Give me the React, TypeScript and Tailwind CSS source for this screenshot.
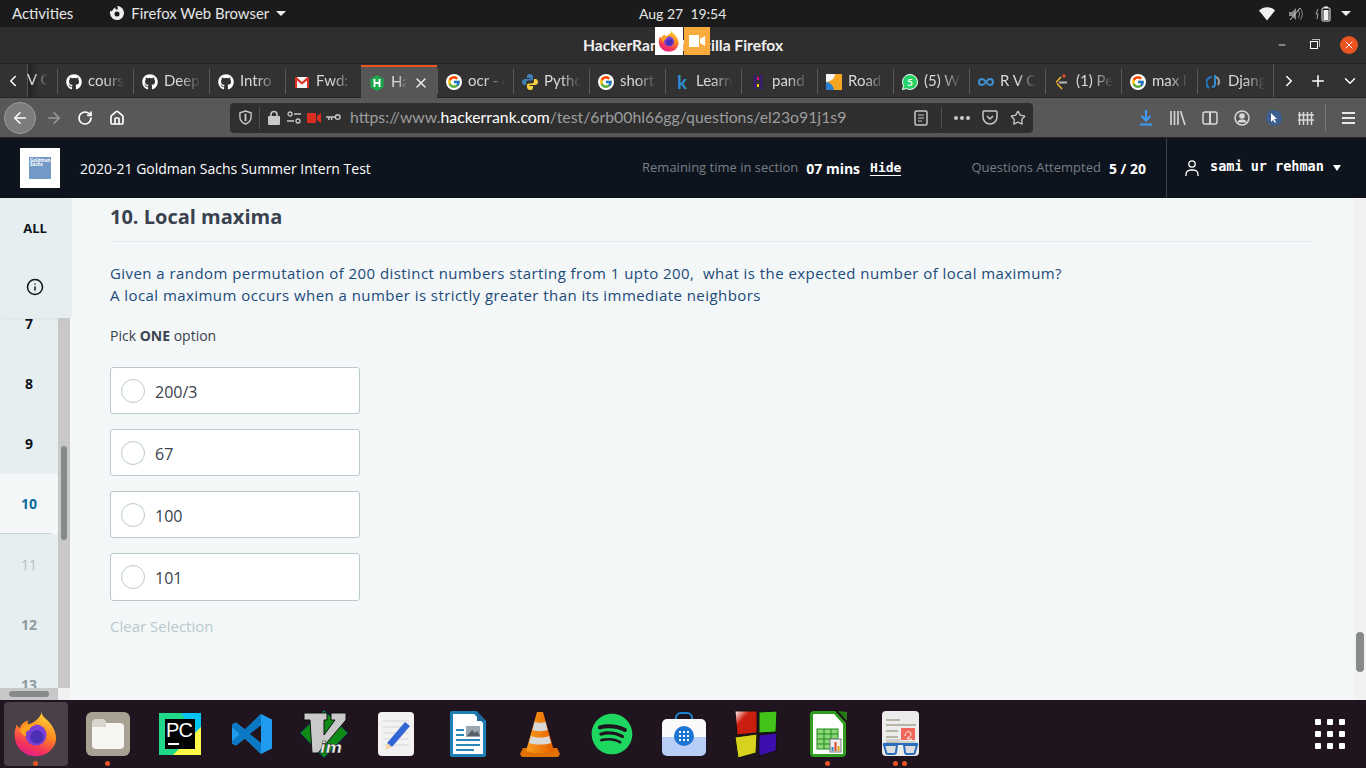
import type { ReactNode } from "react";
import { FaGithub, FaSpotify } from "react-icons/fa";
import { FcGoogle } from "react-icons/fc";
import { Info, X, Minus, Plus, ChevronLeft, ChevronRight, ChevronDown, ArrowLeft, ArrowRight, RotateCw, Home, Star } from "lucide-react";

const ui = "font-['Lato','Open_Sans',sans-serif]";
const page = "font-['Open_Sans',sans-serif]";

function FirefoxLogo({ size, id }: { size: number; id: string }) {
  return (
    <svg width={size} height={size} viewBox="0 0 48 48">
      <defs>
        <linearGradient id={id} x1="0.75" y1="0" x2="0.35" y2="1">
          <stop offset="0" stopColor="#ffd93a" />
          <stop offset="0.45" stopColor="#ff8a1f" />
          <stop offset="0.8" stopColor="#f5325b" />
          <stop offset="1" stopColor="#e0208c" />
        </linearGradient>
      </defs>
      <path d="M30 1c0 5 5 7 9 12 7 9 8 19 2 26-8 10-24 11-33 2C1 34 0 23 4 14c1 2 2 3 3 4 2-5 5-7 9-8-1 2-1 3 0 4 6-2 12-6 14-13z" fill={`url(#${id})`} />
      <circle cx="24" cy="25" r="11" fill="#7a3fd6" />
      <circle cx="25" cy="27" r="7" fill="#4a2fb5" />
      <path d="M7 20c4-6 11-8 17-5-4 0-6 2-7 5-4 1-4 3-3 6-3 0-5-2-7-6z" fill="#ffa21f" />
    </svg>
  );
}

function GitIcon() {
  return <FaGithub className="w-4 h-4 text-white shrink-0" />;
}

function GoogleIcon() {
  return (
    <span className="w-4 h-4 shrink-0 rounded-full bg-white flex items-center justify-center">
      <FcGoogle className="w-3.5 h-3.5" />
    </span>
  );
}

const tabs: { label: string; icon: ReactNode; active?: boolean }[] = [
  { label: "cours", icon: <GitIcon /> },
  { label: "Deep", icon: <GitIcon /> },
  { label: "Intro", icon: <GitIcon /> },
  {
    label: "Fwd:",
    icon: (
      <svg className="w-4 h-4 shrink-0" viewBox="0 0 16 16">
        <rect x="1" y="3" width="14" height="11" fill="#f4f4f4" />
        <path d="M1 3v11h2V6.500l5 4 5-4V14h2V3h-1.500L8 8 2.500 3z" fill="#d93025" />
      </svg>
    ),
  },
  {
    label: "Ha",
    active: true,
    icon: (
      <svg className="w-4 h-4 shrink-0" viewBox="0 0 16 16">
        <path d="M8 0l6.500 3.800v8.400L8 16l-6.500-3.800V3.800z" fill="#1ba94c" />
        <path d="M5.500 4v8M10.500 4v8M5.500 8h5" stroke="#fff" strokeWidth="1.800" fill="none" />
      </svg>
    ),
  },
  { label: "ocr - c", icon: <GoogleIcon /> },
  {
    label: "Pytho",
    icon: (
      <svg className="w-4 h-4 shrink-0" viewBox="0 0 16 16">
        <path d="M8 0C5 0 5 1.500 5 3v1h3.500v1H3C1 5 0 6.500 0 8s1 3 2.500 3H4V9c0-1.500 1-2.500 2.500-2.500h3C11 6.500 11 5.500 11 4.500V3c0-2-1.500-3-3-3z" fill="#3f7fb8" />
        <path d="M8 16c3 0 3-1.500 3-3v-1H7.500v-1H13c2 0 3-1.500 3-3s-1-3-2.500-3H12v2c0 1.500-1 2.500-2.500 2.500h-3C5 9.500 5 10.500 5 11.500V13c0 2 1.500 3 3 3z" fill="#f7cf3d" />
      </svg>
    ),
  },
  { label: "short", icon: <GoogleIcon /> },
  { label: "Learn", icon: <span className="w-4 text-center text-[#2f8fd8] text-[18px] leading-4 font-bold shrink-0">k</span> },
  {
    label: "pand",
    icon: (
      <svg className="w-4 h-4 shrink-0" viewBox="0 0 16 16">
        <path d="M5 1v14M11 1v14" stroke="#3b1a78" strokeWidth="2.500" fill="none" />
        <rect x="7" y="3" width="2" height="3" fill="#e70488" />
        <rect x="7" y="10" width="2" height="3" fill="#ffca00" />
      </svg>
    ),
  },
  {
    label: "Road",
    icon: (
      <svg className="w-4 h-4 shrink-0" viewBox="0 0 16 16">
        <rect width="16" height="16" fill="#f6a623" />
        <path d="M0 16V0h9C9 4 6 7 0 8z" fill="#f5f5f5" />
        <path d="M0 16V8c4 0 7 3 8 8z" fill="#2b7fd4" />
      </svg>
    ),
  },
  {
    label: "(5) W",
    icon: (
      <span className="relative w-4 h-4 shrink-0">
        <svg className="w-4 h-4" viewBox="0 0 16 16">
          <path d="M8 .500a7.500 7.500 0 1 1-3.500 14.100L.500 15.500l1-3.800A7.500 7.500 0 0 1 8 .500z" fill="#25d366" stroke="#fff" />
        </svg>
        <span className="absolute inset-0 text-center text-[10px] leading-4 font-bold text-white">5</span>
      </span>
    ),
  },
  {
    label: "R V C",
    icon: (
      <svg className="w-4 h-4 shrink-0" viewBox="0 0 16 16">
        <path d="M8 8c-1.500-2-2.500-3-4-3a3 3 0 0 0 0 6c1.500 0 2.500-1 4-3s2.500-3 4-3a3 3 0 0 1 0 6c-1.500 0-2.500-1-4-3z" stroke="#3f8fd2" strokeWidth="2" fill="none" />
      </svg>
    ),
  },
  {
    label: "(1) Pe",
    icon: (
      <svg className="w-4 h-4 shrink-0" viewBox="0 0 16 16">
        <circle cx="10" cy="2" r="1.800" fill="#d84a2b" />
        <path d="M7 3L2 8.500M3 9.500L8 15" stroke="#f2b233" strokeWidth="1.600" fill="none" />
        <path d="M2 4L1 8" stroke="#222" />
        <path d="M5 8.500h8" stroke="#bbb" strokeWidth="2" />
      </svg>
    ),
  },
  { label: "max l", icon: <GoogleIcon /> },
  {
    label: "Djang",
    icon: (
      <svg className="w-4 h-4 shrink-0" viewBox="0 0 16 16">
        <path d="M6 3a6 6 0 0 0-3 11" stroke="#2477c4" strokeWidth="2.200" fill="none" />
        <path d="M10 3c3 1 4 5 2 8" stroke="#9a9a9a" strokeWidth="2.200" fill="none" />
        <path d="M9 1v9a3 3 0 0 1-3 3" stroke="#2f8fd8" strokeWidth="2" fill="none" />
      </svg>
    ),
  },
];

function DocIcon({ children }: { children: ReactNode }) {
  return <div className="relative w-[72px] h-full shrink-0 flex items-center justify-center">{children}</div>;
}

function Dot({ left }: { left: number }) {
  return <span className="absolute bottom-[2px] w-[5px] h-[5px] rounded-full bg-[#e95420]" style={{ left }} />;
}

function Dock() {
  return (
    <div className="relative h-[68px] shrink-0 bg-[#20141f] flex items-center">
      <div className="absolute left-1 top-[2px] w-16 h-16 rounded bg-[#4a4047]" />
      <Dot left={33} />
      <Dot left={105} />
      <Dot left={825} />
      <Dot left={893} />
      <Dot left={902} />
      <DocIcon>
        <FirefoxLogo size={46} id="ffdock" />
      </DocIcon>
      <DocIcon>
        <div className="w-11 h-11 rounded-md bg-[#a8a294] flex items-center justify-center">
          <div className="relative w-8 h-[26px] mt-1 rounded-sm bg-[#f8f6f3]">
            <div className="absolute -top-1 left-0 w-3.5 h-2 rounded-t-sm bg-[#d9d6d0]" />
          </div>
        </div>
      </DocIcon>
      <DocIcon>
        <svg width="42" height="42" viewBox="0 0 42 42">
          <rect width="42" height="42" fill="#21d789" />
          <path d="M22 0h20v30z" fill="#07c3f2" />
          <path d="M42 14v28H14z" fill="#fcf84a" />
          <rect x="6" y="6" width="30" height="30" fill="#000" />
          <text x="7" y="24" fill="#fff" fontSize="20" fontFamily="Liberation Sans, sans-serif" textLength="27">PC</text>
          <rect x="9" y="30" width="11" height="2" fill="#fff" />
        </svg>
      </DocIcon>
      <DocIcon>
        <svg width="42" height="42" viewBox="0 0 42 42">
          <path d="M30 1l11 5.500v29L30 41 14 25.500 5 32.500 1 30.500V11.500l4-2 9 7zM30 12L18 21l12 9z" fill="#1f9cf0" />
          <path d="M30 1v11L5 32.500 1 30.500V28L24 7z" fill="#0a78c2" />
          <path d="M30 41V30L5 9.500l-4 2V14l23 21z" fill="#0a78c2" />
        </svg>
      </DocIcon>
      <DocIcon>
        <svg width="50" height="50" viewBox="0 0 50 50">
          <path d="M25 1l24 23-24 25L1 24z" fill="#0f8a17" stroke="#0a2a5c" />
          <path d="M5 4h23v7h-3v15l11-15h-4V4h15v7L19 44h-6L11 11H5z" fill="#c9c9c9" stroke="#111" />
          <text x="21" y="44" fill="#f2f2f2" stroke="#111" strokeWidth="0.500" fontSize="16" fontStyle="italic" fontWeight="bold" fontFamily="DejaVu Sans, sans-serif">im</text>
        </svg>
      </DocIcon>
      <DocIcon>
        <svg width="36" height="44" viewBox="0 0 36 44">
          <rect width="36" height="44" rx="4" fill="#f2f2f2" />
          <path d="M5 9h26M5 15h26M5 21h26M5 27h26M5 33h26" stroke="#d6d6d6" />
          <path d="M27 10l5 4-18 21-5-4z" fill="#3467d6" />
          <path d="M9 31l5 4-7 3z" fill="#f3d6a5" />
        </svg>
      </DocIcon>
      <DocIcon>
        <svg width="36" height="46" viewBox="0 0 36 46">
          <path d="M2 0h24l10 10v34a2 2 0 0 1-2 2H2a2 2 0 0 1-2-2V2a2 2 0 0 1 2-2z" fill="#1f7fb8" />
          <path d="M3 3h21l9 9v31H3z" fill="#fff" />
          <path d="M27 0l9 10h-9z" fill="#1f6a9c" />
          <rect x="6" y="18" width="8" height="2" fill="#2b86c0" />
          <rect x="6" y="23" width="8" height="2" fill="#2b86c0" />
          <rect x="6" y="28" width="24" height="2" fill="#2b86c0" />
          <rect x="6" y="33" width="24" height="2" fill="#2b86c0" />
          <rect x="6" y="38" width="18" height="2" fill="#2b86c0" />
          <rect x="16" y="15" width="14" height="11" fill="#9aa7b0" />
          <path d="M17 25l5-6 3 3 2-2 3 5z" fill="#53606a" />
        </svg>
      </DocIcon>
      <DocIcon>
        <svg width="40" height="46" viewBox="0 0 40 46">
          <defs>
            <linearGradient id="vlc" x1="0" y1="0" x2="1" y2="0">
              <stop offset="0" stopColor="#f9a11e" />
              <stop offset="1" stopColor="#e85f00" />
            </linearGradient>
          </defs>
          <path d="M3 37h34l3 6-2 3H2l-2-3z" fill="#e07000" />
          <path d="M17 1h6l11 39c-7 3-21 3-28 0z" fill="url(#vlc)" />
          <path d="M14.500 11c3 1 8 1 11 0l2 8c-4 1.500-11 1.500-15 0zM11 25c5 2 13 2 18 0l2 7c-6 2-16 2-22 0z" fill="#d9d9d9" />
        </svg>
      </DocIcon>
      <DocIcon>
        <FaSpotify className="w-[42px] h-[42px] text-[#1ed760]" />
      </DocIcon>
      <DocIcon>
        <svg width="46" height="44" viewBox="0 0 46 44">
          <path d="M15 9V6a5 5 0 0 1 5-5h6a5 5 0 0 1 5 5v3" fill="none" stroke="#1a86d9" strokeWidth="2" />
          <path d="M6 7h34a5 5 0 0 1 5 5v13H1V12a5 5 0 0 1 5-5z" fill="#fafafa" />
          <path d="M1 25h44v14a5 5 0 0 1-5 5H6a5 5 0 0 1-5-5z" fill="#b9cef7" />
          <circle cx="23" cy="24" r="10" fill="#1c74d4" />
          <path d="M18 19h2v2h-2zM22 19h2v2h-2zM26 19h2v2h-2zM18 23h2v2h-2zM22 23h2v2h-2zM26 23h2v2h-2zM18 27h2v2h-2zM22 27h2v2h-2zM26 27h2v2h-2z" fill="#fff" />
        </svg>
      </DocIcon>
      <DocIcon>
        <svg width="44" height="49" viewBox="0 0 44 49">
          <defs>
            <linearGradient id="redblock" x1="0" y1="0" x2="1" y2="1">
              <stop offset="0" stopColor="#fff" />
              <stop offset="0.35" stopColor="#cc1f0f" />
              <stop offset="1" stopColor="#c41c0c" />
            </linearGradient>
          </defs>
          <path d="M1 1l22 0v22L3 25z" fill="url(#redblock)" stroke="#111" />
          <path d="M25 2l18-1-1 21-17 1z" fill="#44c41b" stroke="#111" />
          <path d="M1 27l22-3-1 19-18 5z" fill="#d6d21e" stroke="#111" />
          <path d="M25 25l18-2-1 18-17 5z" fill="#3d0fb0" stroke="#111" />
        </svg>
      </DocIcon>
      <DocIcon>
        <svg width="37" height="46" viewBox="0 0 37 46">
          <path d="M4 0h21l11 12v30a4 4 0 0 1-4 4H4a4 4 0 0 1-4-4V4a4 4 0 0 1 4-4z" fill="#2f9e1f" />
          <path d="M4 3h20l9 10v30H3V4z" fill="#fff" />
          <path d="M28 0l9 1v9z" fill="#237d14" />
          <rect x="7" y="18" width="21" height="20" fill="#8cd67a" stroke="#1e8a14" />
          <path d="M7 23h21M7 28h21M7 33h21M14 18v20M21 18v20" stroke="#1e8a14" />
          <rect x="20" y="28" width="11" height="13" fill="#eee" stroke="#777" />
          <path d="M22.500 40v-4" strokeWidth="2" stroke="#2b86c0" />
          <path d="M25.500 40v-9" strokeWidth="2" stroke="#d8442a" />
          <path d="M28.500 40v-5" strokeWidth="2" stroke="#e0a51e" />
        </svg>
      </DocIcon>
      <DocIcon>
        <svg width="37" height="46" viewBox="0 0 37 46">
          <rect width="37" height="45" rx="4" fill="#ececec" />
          <path d="M4 9h14M4 14h30M4 20h12M4 26h12M4 32h12" stroke="#b8b4a8" strokeWidth="2" />
          <rect x="19" y="17" width="14" height="12" fill="#f0665a" />
          <path d="M23 25c0-5 6-6 6-2s-6 3-3 5h4" stroke="#fff" fill="none" />
          <path d="M4 29h14M4 31h30" stroke="#b8b4a8" />
          <path d="M1 33h35" stroke="#2a6dbd" strokeWidth="2" />
          <path d="M2 34h13l-1 7a2 2 0 0 1-2 2H6a2 2 0 0 1-2-2zM22 34h13l-2 7a2 2 0 0 1-2 2h-6a2 2 0 0 1-2-2z" fill="#ddd" stroke="#2a6dbd" strokeWidth="2" />
        </svg>
      </DocIcon>
      <div className="ml-auto mr-[21px] grid grid-cols-3 gap-[6px]">
        {Array.from({ length: 9 }).map((_, i) => (
          <span key={i} className="w-[6px] h-[6px] rounded-[1px] bg-white" />
        ))}
      </div>
    </div>
  );
}

function TopBar() {
  return (
    <div className={`${ui} relative h-[27px] shrink-0 bg-[#1b1b1b] flex items-center text-[15px] text-[#e6e6e6] pl-3`}>
      <span>Activities</span>
      <span className="ml-[36px] flex items-center gap-[6px]">
        <svg width="16" height="16" viewBox="0 0 16 16">
          <path d="M8 1a7 7 0 1 1-6.500 4.500c.5.5 1 .8 1.500.9C3.500 4.500 5 3 6.500 2.500 6.200 3.300 6.500 4 7 4.500 9 4.800 9.500 3 8 1z" fill="#eee" />
          <circle cx="8" cy="9" r="2.500" fill="#1b1b1b" />
        </svg>
        <span className="text-[14.900px]">Firefox Web Browser</span>
        <span className="w-0 h-0 ml-[1px] border-x-[5px] border-x-transparent border-t-[5px] border-t-[#eee]" />
      </span>
      <span className="absolute left-[639px] text-[14px]">Aug 27&nbsp;&nbsp;19:54</span>
      <div className="ml-auto flex items-center pr-[15px]">
        <svg width="16" height="14" viewBox="0 0 16 14">
          <path d="M0 3.500C4.500-1 11.500-1 16 3.500L8 13.500z" fill="#f2f2f2" />
        </svg>
        <svg className="ml-[13px]" width="15" height="14" viewBox="0 0 15 14">
          <path d="M1 5h3l4-4v12l-4-4H1z" fill="#8a8a8a" />
          <path d="M10 3c2 2 2 6 0 8M12 1c3 3 3 9 0 12" stroke="#8a8a8a" fill="none" />
          <path d="M2 13L12 1" stroke="#ccc" />
        </svg>
        <svg className="ml-[12px]" width="16" height="16" viewBox="0 0 16 16">
          <path d="M3 3L1 8h2l-1 5" stroke="#aaa" fill="none" />
          <rect x="7" y="2" width="8" height="13" rx="1" fill="none" stroke="#eee" />
          <rect x="9" y="0.500" width="4" height="1.500" fill="#eee" />
          <rect x="8.500" y="4" width="5" height="10" fill="#eee" />
        </svg>
        <span className="ml-[10px] w-0 h-0 border-x-[5px] border-x-transparent border-t-[5px] border-t-[#eee]" />
      </div>
    </div>
  );
}

function TitleBar() {
  return (
    <div className={`${ui} relative h-[36px] shrink-0 bg-[#2e2e2e] flex items-center justify-center pt-[2px] text-[15.600px] font-bold text-[#f0f0f0]`}>
      HackerRank - Mozilla Firefox
      <div className="absolute left-[655px] top-0 h-7 w-7 bg-white flex items-center justify-center">
        <FirefoxLogo size={22} id="ffsmall" />
      </div>
      <div className="absolute left-[684px] top-0 h-7 w-[26px] bg-[#fbab3d] flex items-center justify-center">
        <svg width="16" height="12" viewBox="0 0 16 12">
          <path d="M0 0h10v12H0zM11 4l5-3v10l-5-3z" fill="#fff" />
        </svg>
      </div>
      <div className="absolute right-[8px] top-0 h-full flex items-center">
        <Minus className="w-2.5 h-2.5 text-white mr-[23px]" strokeWidth={2} />
        <span className="relative w-2 h-2 border border-white mr-[22px]">
          <span className="absolute -top-[3px] -right-[3px] w-2 h-2 border-t border-r border-[#bbb]" />
        </span>
        <span className="w-[18px] h-[18px] rounded-full bg-[#e95420] flex items-center justify-center">
          <X className="w-3 h-3 text-white" strokeWidth={2} />
        </span>
      </div>
    </div>
  );
}

function TabStrip() {
  return (
    <div className={`${ui} h-[34px] shrink-0 bg-[#323232] border-t border-t-[#242424] flex items-stretch text-[15px] text-[#d8d8d8]`}>
      <div className="w-[27px] shrink-0 flex items-center pl-[4px]">
        <ChevronLeft className="w-[18px] h-[18px] text-white" strokeWidth={2} />
      </div>
      <div className="w-[30px] shrink-0 flex items-center border-l border-l-[#555] bg-gradient-to-r from-[#222] to-transparent to-40%">
        <span className="-ml-[1px] pb-[2px] whitespace-nowrap [mask-image:linear-gradient(to_right,black_30%,transparent_90%)]">V C</span>
      </div>
      {tabs.map((t) => (
        <div
          key={t.label}
          className={
            t.active
              ? "relative w-[76px] shrink-0 flex items-center gap-[6px] pl-[8px] pr-2 mt-px -mb-px bg-[#565656] border-t-2 border-t-[#e95420]"
              : "relative w-[76px] shrink-0 flex items-center gap-[6px] pl-[8px] pr-2 border-l border-l-[#5a5a5a] mt-[5px] mb-[3px]"
          }
        >
          {t.icon}
          <span className="flex-1 pb-[2px] overflow-hidden whitespace-nowrap [mask-image:linear-gradient(to_right,black_45%,transparent)]">{t.label}</span>
          {t.active && <X className="w-4 h-4 text-[#f0f0f0] shrink-0" strokeWidth={2} />}
        </div>
      ))}
      <div className="w-[30px] shrink-0 border-l border-l-[#5a5a5a] flex items-center justify-center">
        <ChevronRight className="w-[18px] h-[18px] text-white" strokeWidth={2} />
      </div>
      <div className="w-[30px] shrink-0 flex items-center justify-center">
        <Plus className="w-[18px] h-[18px] text-white" strokeWidth={2} />
      </div>
      <div className="flex-1 flex items-center justify-center">
        <ChevronDown className="w-[18px] h-[18px] text-white" strokeWidth={2} />
      </div>
    </div>
  );
}

function NavBar() {
  return (
    <div className={`${ui} h-[41px] shrink-0 bg-[#585858] border-t border-t-[#242424] border-b border-b-[#242424] flex items-center pl-[4px]`}>
      <div className="w-8 h-8 rounded-full bg-[#7c7c7c] border border-[#9a9a9a] flex items-center justify-center">
        <ArrowLeft className="w-[18px] h-[18px] text-white" strokeWidth={2} />
      </div>
      <ArrowRight className="ml-[9px] w-[18px] h-[18px] text-[#9a9a9a]" strokeWidth={2} />
      <RotateCw className="ml-[14px] w-4 h-4 text-white" strokeWidth={2.500} />
      <Home className="ml-4 w-4 h-4 text-white" strokeWidth={2.500} />
      <div className="ml-[105px] w-[803px] h-[30px] rounded bg-[#2f2f2f] flex items-center text-[15.800px] text-[#9d9d9d]">
        <svg className="ml-[9px]" width="13" height="15" viewBox="0 0 14 16">
          <path d="M7 1l6 2v5c0 3-3 6-6 7-3-1-6-4-6-7V3z" fill="none" stroke="#c8c8c8" strokeWidth="1.500" />
          <path d="M7 4v8" stroke="#c8c8c8" strokeWidth="2" />
        </svg>
        <span className="ml-[7px] h-[22px] border-l border-[#4e4e4e]" />
        <svg className="ml-[8px]" width="12" height="15" viewBox="0 0 12 15">
          <path d="M3 7V4.500a3 3 0 0 1 6 0V7" fill="none" stroke="#c8c8c8" strokeWidth="1.600" />
          <rect y="6" width="12" height="9" rx="1" fill="#c8c8c8" />
        </svg>
        <svg className="ml-[7px]" width="14" height="13" viewBox="0 0 14 13">
          <circle cx="3" cy="3" r="2" fill="none" stroke="#c8c8c8" strokeWidth="1.300" />
          <path d="M7 3h7M0 10h7" stroke="#c8c8c8" strokeWidth="1.500" />
          <circle cx="11" cy="10" r="2" fill="none" stroke="#c8c8c8" strokeWidth="1.300" />
        </svg>
        <svg className="ml-[6px]" width="14" height="12" viewBox="0 0 14 12">
          <path d="M0 1h9v10H0zM10 4l4-3v10l-4-3z" fill="#d92d1f" />
        </svg>
        <svg className="ml-[5px]" width="15" height="10" viewBox="0 0 16 10">
          <circle cx="12.500" cy="4" r="2.500" fill="none" stroke="#c8c8c8" strokeWidth="1.500" />
          <path d="M10 4H0M3 4v3M6 4v3" stroke="#c8c8c8" strokeWidth="1.500" />
        </svg>
        <span className="ml-[9px] pb-[2px] whitespace-nowrap">
          https://www.<span className="text-white">hackerrank.com</span>/test/6rb00hl66gg/questions/el23o91j1s9
        </span>
        <div className="ml-auto flex items-center">
          <svg width="14" height="16" viewBox="0 0 14 16">
            <rect x="1" y="1" width="12" height="14" rx="1.500" fill="none" stroke="#c8c8c8" strokeWidth="1.500" />
            <path d="M4 5h6M4 8h6M4 11h4" stroke="#c8c8c8" />
          </svg>
          <span className="ml-[13px] h-[22px] border-l border-[#4e4e4e]" />
          <span className="ml-[12px] flex gap-[2px]">
            <i className="w-[4px] h-[4px] rounded-full bg-[#c8c8c8]" />
            <i className="w-[4px] h-[4px] rounded-full bg-[#c8c8c8]" />
            <i className="w-[4px] h-[4px] rounded-full bg-[#c8c8c8]" />
          </span>
          <svg className="ml-[12px]" width="16" height="15" viewBox="0 0 16 15">
            <path d="M2 1h12a1 1 0 0 1 1 1v5a7 7 0 0 1-14 0V2a1 1 0 0 1 1-1z" fill="none" stroke="#c8c8c8" strokeWidth="1.500" />
            <path d="M5 6l3 3 3-3" fill="none" stroke="#c8c8c8" strokeWidth="1.500" />
          </svg>
          <Star className="ml-3 mr-[7px] w-4 h-4 text-[#c8c8c8]" strokeWidth={2} />
        </div>
      </div>
      <div className="flex-1 flex items-center pl-[105px]">
        <svg width="16" height="17" viewBox="0 0 16 17">
          <path d="M8 1v10M3.500 7L8 11.500 12.500 7" fill="none" stroke="#3d9cf5" strokeWidth="2" />
          <path d="M2 15.500h12" stroke="#3d9cf5" strokeWidth="2" />
        </svg>
        <svg className="ml-[16px]" width="16" height="14" viewBox="0 0 16 14">
          <path d="M1 0v14M4.500 0v14M8 0v14M10.500 0l4.500 14" stroke="#d8d8d8" strokeWidth="1.600" fill="none" />
        </svg>
        <svg className="ml-[16px]" width="16" height="14" viewBox="0 0 16 14">
          <rect x="1" y="1" width="14" height="12" rx="2" fill="none" stroke="#d8d8d8" strokeWidth="1.500" />
          <path d="M8 1v12" stroke="#d8d8d8" strokeWidth="2" />
        </svg>
        <svg className="ml-[16px]" width="16" height="16" viewBox="0 0 16 16">
          <circle cx="8" cy="8" r="7" fill="none" stroke="#d8d8d8" strokeWidth="1.500" />
          <circle cx="8" cy="6" r="2.800" fill="#d8d8d8" />
          <path d="M3 12.500c1-2.500 3-3 5-3s4 .5 5 3" fill="#d8d8d8" />
        </svg>
        <span className="ml-[16px] w-4 h-4 rounded-full bg-[#3f5f8f] flex items-center justify-center">
          <svg width="8" height="10" viewBox="0 0 8 10"><path d="M1 0v9l2-2 2 3 1-1-2-3h3z" fill="#fff" /></svg>
        </span>
        <svg className="ml-[16px]" width="16" height="14" viewBox="0 0 16 14">
          <path d="M1.500 1v13M5.500 1v13M9.500 1v13M13.500 1v13M0 4h16M0 9h16" stroke="#d8d8d8" strokeWidth="1.500" />
        </svg>
        <span className="ml-[11px] h-[28px] border-l border-[#777]" />
        <div className="ml-[16px] flex flex-col gap-[3px]">
          <i className="w-[13px] h-[2px] bg-[#e8e8e8]" />
          <i className="w-[13px] h-[2px] bg-[#e8e8e8]" />
          <i className="w-[13px] h-[2px] bg-[#e8e8e8]" />
        </div>
      </div>
    </div>
  );
}

function PageHeader() {
  return (
    <div className={`${page} h-[60px] shrink-0 bg-[#0e141e] flex items-center pl-5 text-[13px]`}>
      <div className="w-10 h-10 bg-white flex items-center justify-center">
        <div className="w-[22px] h-[22px] bg-[#7399c6] text-[4.500px] leading-[4px] text-white font-bold pl-[1px] pt-[1px]">Goldman<br />Sachs</div>
      </div>
      <span className="ml-5 text-[14px] text-white">2020-21 Goldman Sachs Summer Intern Test</span>
      <div className="ml-auto flex items-center h-full">
        <span className="text-[#767e86] text-[13px]">Remaining time in section</span>
        <span className="ml-2 font-bold text-white text-[14px]">07 mins</span>
        <span className="ml-[10px] font-['DejaVu_Sans_Mono',monospace] font-bold text-white text-[13px] border-b border-white leading-[15px]">Hide</span>
        <span className="ml-[70px] text-[#767e86] text-[13px]">Questions Attempted</span>
        <span className="ml-2 font-bold text-white text-[14px]">5 / 20</span>
        <div className="ml-5 w-[200px] h-full border-l border-[#39424e] flex items-center pl-[18px] font-['DejaVu_Sans_Mono',monospace] font-bold text-white text-[13.500px]">
          <svg width="14" height="18" viewBox="0 0 14 18">
            <circle cx="7" cy="5" r="3.200" fill="none" stroke="#fff" strokeWidth="1.300" />
            <path d="M1 17v-1.500A4.500 4.500 0 0 1 5.500 11h3a4.500 4.500 0 0 1 4.500 4.500V17" fill="none" stroke="#fff" strokeWidth="1.300" />
          </svg>
          <span className="ml-[11px] -mt-[3px]">sami ur rehman</span>
          <span className="ml-[9px] w-0 h-0 border-x-[4px] border-x-transparent border-t-[6px] border-t-white" />
        </div>
      </div>
    </div>
  );
}

function Sidebar() {
  const rows = [
    { n: 7, c: "h-[60px] text-[#0e141e]" },
    { n: 8, c: "h-[60px] text-[#0e141e]" },
    { n: 9, c: "h-[61px] pb-px text-[#0e141e]" },
    { n: 10, c: "h-[60px] pb-[2px] text-[#0b6b9e] bg-[#f3f7f7]" },
    { n: 11, c: "h-[60px] text-[#b4bfc3] font-normal" },
    { n: 12, c: "h-[60px] text-[#8f9a9f]" },
    { n: 13, c: "h-[60px] text-[#8f9a9f]" },
  ];
  return (
    <div className={`${page} w-[70px] shrink-0 flex flex-col bg-[#e7eef0]`}>
      <div className="h-[120px] shrink-0 flex flex-col items-center shadow-[1px_0_3px_rgba(0,0,0,0.08)]">
        <span className="mt-[21px] text-[13px] font-bold text-[#0e141e]">ALL</span>
        <Info className="mt-[39px] w-[18px] h-[18px] text-[#0e141e]" strokeWidth={2} />
      </div>
      <div className="flex-1 flex min-h-0">
        <div className="w-[58px] overflow-hidden">
          <div className="-mt-[25px]">
            {rows.map((r) => (
              <div key={r.n} className={`relative flex items-center justify-center text-[14px] font-bold ${r.c}`}>
                {r.n}
                {r.n === 10 && <span className="absolute bottom-0 left-0 w-[52px] h-px bg-[#c6d3d6]" />}
              </div>
            ))}
          </div>
        </div>
        <div className="w-3 bg-[#c8c8c8] pt-[128px]">
          <div className="mx-auto w-[6px] h-[94px] rounded-full bg-[#868a8b]" />
        </div>
      </div>
      <div className="h-3 shrink-0 flex">
        <div className="w-[58px] bg-[#c8c8c8] flex items-center justify-center">
          <div className="w-10 h-[6px] rounded-full bg-[#868a8b]" />
        </div>
        <div className="w-3 bg-[#f1f1f1]" />
      </div>
    </div>
  );
}

function Option({ label, tall }: { label: string; tall?: boolean }) {
  return (
    <div className={`w-[250px] ${tall ? "h-[48px]" : "h-[47px]"} rounded-[3px] border border-[#b9c9ce] bg-white flex items-center pl-[10px] text-[16px] text-[#39424e]`}>
      <span className="w-6 h-6 rounded-full border border-[#b9c9ce]" />
      <span className="ml-[10px] pt-[2px]">{label}</span>
    </div>
  );
}

export default function App() {
  return (
    <div className="w-[1366px] h-screen overflow-hidden flex flex-col bg-[#f3f7f7]">
      <TopBar />
      <TitleBar />
      <TabStrip />
      <NavBar />
      <PageHeader />
      <div className="flex-1 min-h-0 flex">
        <Sidebar />
        <div className={`${page} flex-1 pl-10 pr-10 pt-[5px]`}>
          <h2 className="h-[39px] border-b border-[#e3eaec] text-[20px] leading-[28px] font-bold text-[#39424e]">10. Local maxima</h2>
          <p className="mt-[20px] text-[15px] leading-[22px] tracking-[0.44px] text-[#1c4a7a]">
            Given a random permutation of 200 distinct numbers starting from 1 upto 200,&nbsp; what is the expected number of local maximum?
            <br />
            A local maximum occurs when a number is strictly greater than its immediate neighbors
          </p>
          <p className="mt-[19px] text-[14px] leading-[22px] text-[#39424e]">
            Pick <b>ONE</b> option
          </p>
          <div className="mt-[20px] flex flex-col gap-[15px]">
            <Option label="200/3" />
            <Option label="67" />
            <Option label="100" />
            <Option label="101" tall />
          </div>
          <p className="mt-[15px] text-[15px] leading-[20px] text-[#b9c9ce]">Clear Selection</p>
        </div>
        <div className="w-3 shrink-0 bg-[#f1f1f1] pt-[434px]">
          <div className="mx-auto w-2 h-10 rounded-full bg-[#868a8b]" />
        </div>
      </div>
      <Dock />
    </div>
  );
}
